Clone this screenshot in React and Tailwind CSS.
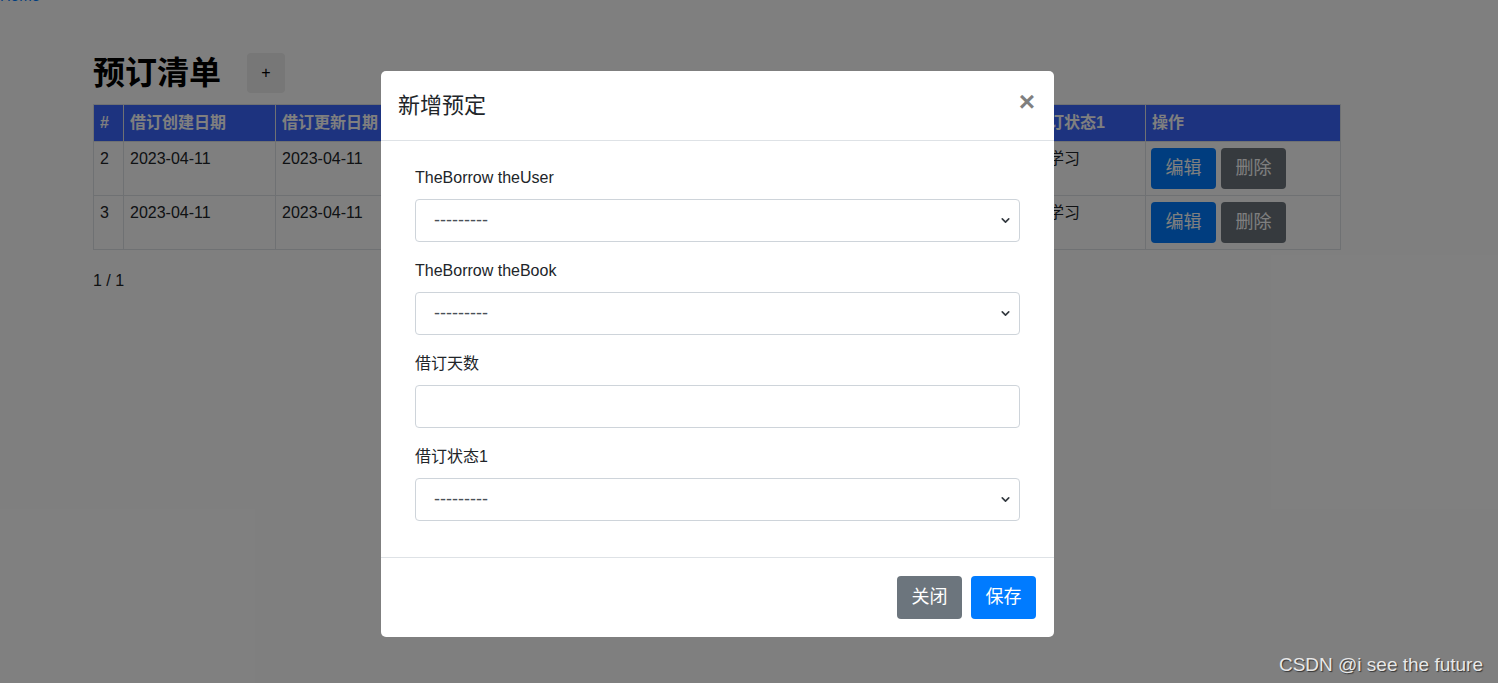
import { ChevronDown } from "lucide-react";

const cols = [
  { title: "#", w: "w-[30px]" },
  { title: "借订创建日期", w: "w-[152px]" },
  { title: "借订更新日期", w: "w-[150px]" },
  { title: "TheBorrow theUser", w: "w-[200px]" },
  { title: "TheBorrow theBook", w: "w-[200px]" },
  { title: "借订天数", w: "w-[200px]" },
  { title: "借订状态1", w: "w-[120px]" },
  { title: "操作", w: "w-[195px]" },
];

const rows = [
  { id: 2, created: "2023-04-11", updated: "2023-04-11", user: "admin", book: "Python", days: "7", status: "爱学习" },
  { id: 3, created: "2023-04-11", updated: "2023-04-11", user: "admin", book: "Java", days: "7", status: "爱学习" },
];

const Select = () => (
  <div className="relative">
    <select className="w-full h-[43px] appearance-none rounded border border-[#ced4da] bg-white pl-[18px] pr-8 text-[18px] text-[#495057] outline-none">
      <option>---------</option>
    </select>
    <ChevronDown className="pointer-events-none absolute right-[8px] top-[15px] w-[13px] h-[13px] text-[#343a40]" strokeWidth={3} />
  </div>
);

const Field = ({ label, children }) => (
  <div className="mb-[17px]">
    <label className="block h-6 leading-6 mb-[9px] text-[16px] text-[#212529]">{label}</label>
    {children}
  </div>
);

export default function App() {
  return (
    <div className="relative w-[1498px] h-[683px] overflow-hidden bg-white font-['Liberation_Sans','Noto_Sans_CJK_SC',sans-serif] text-[#212529]">
      <a className="block -mt-[12px] text-[15px] leading-[15px] text-[#007bff]">Home</a>

      {/* Page */}
      <div className="pl-[93px] pt-[50px] w-[1340px]">
        <div className="flex items-center h-[40px]">
          <h1 className="text-[32px] font-bold leading-none text-black">预订清单</h1>
          <button className="ml-[26px] w-[38px] h-[40px] rounded bg-[#eeeeee] text-[16px] text-black">+</button>
        </div>

        <table className="mt-[11px] w-[1247px] table-fixed border-collapse text-[16px]">
          <colgroup>
            {cols.map((c) => (
              <col key={c.title} className={c.w} />
            ))}
          </colgroup>
          <thead>
            <tr className="bg-[#3a66ff] text-white">
              {cols.map((c) => (
                <th key={c.title} className="h-[37px] border border-[#dee2e6] px-[6px] text-left font-bold">
                  {c.title}
                </th>
              ))}
            </tr>
          </thead>
          <tbody>
            {rows.map((r) => (
              <tr key={r.id}>
                {[r.id, r.created, r.updated, r.user, r.book, r.days, r.status].map((v, i) => (
                  <td key={i} className="h-[54px] border border-[#dee2e6] px-[6px] pt-[7px] align-top leading-[20px]">
                    {v}
                  </td>
                ))}
                <td className="border border-[#dee2e6] px-[5px] py-[6px] align-top">
                  <div className="flex gap-[5px]">
                    <button className="w-[65px] h-[41px] rounded bg-[#007bff] text-[18px] text-white">编辑</button>
                    <button className="w-[65px] h-[41px] rounded bg-[#6c757d] text-[18px] text-white">删除</button>
                  </div>
                </td>
              </tr>
            ))}
          </tbody>
        </table>

        <p className="mt-[19px] text-[16px] leading-6">1 / 1</p>
      </div>

      {/* Backdrop + modal */}
      <div className="absolute inset-0 bg-black/50">
        <div className="ml-[381px] mt-[71px] w-[673px] rounded-[5px] bg-white">
          <div className="flex items-center justify-between h-[70px] border-b border-[#dee2e6] pl-[17px] pr-[19px]">
            <h5 className="text-[22px] leading-none text-[#212529]">新增预定</h5>
            <span className="-mt-[8px] text-[28px] font-bold leading-none text-black/50">×</span>
          </div>
          <div className="px-[34px] pt-[25px] pb-[19px]">
            <Field label="TheBorrow theUser">
              <Select />
            </Field>
            <Field label="TheBorrow theBook">
              <Select />
            </Field>
            <Field label="借订天数">
              <input className="block w-full h-[43px] rounded border border-[#ced4da] px-3 outline-none" />
            </Field>
            <Field label="借订状态1">
              <Select />
            </Field>
          </div>
          <div className="flex justify-end gap-[9px] h-[80px] items-center border-t border-[#dee2e6] pr-[18px]">
            <button className="w-[65px] h-[43px] rounded bg-[#6c757d] text-[18px] text-white">关闭</button>
            <button className="w-[65px] h-[43px] rounded bg-[#007bff] text-[18px] text-white">保存</button>
          </div>
        </div>
      </div>

      <div className="absolute right-[15px] bottom-[4px] text-[19px] text-[#e8e8e8] [text-shadow:1px_1px_1px_#333]">
        CSDN @i see the future
      </div>
    </div>
  );
}
